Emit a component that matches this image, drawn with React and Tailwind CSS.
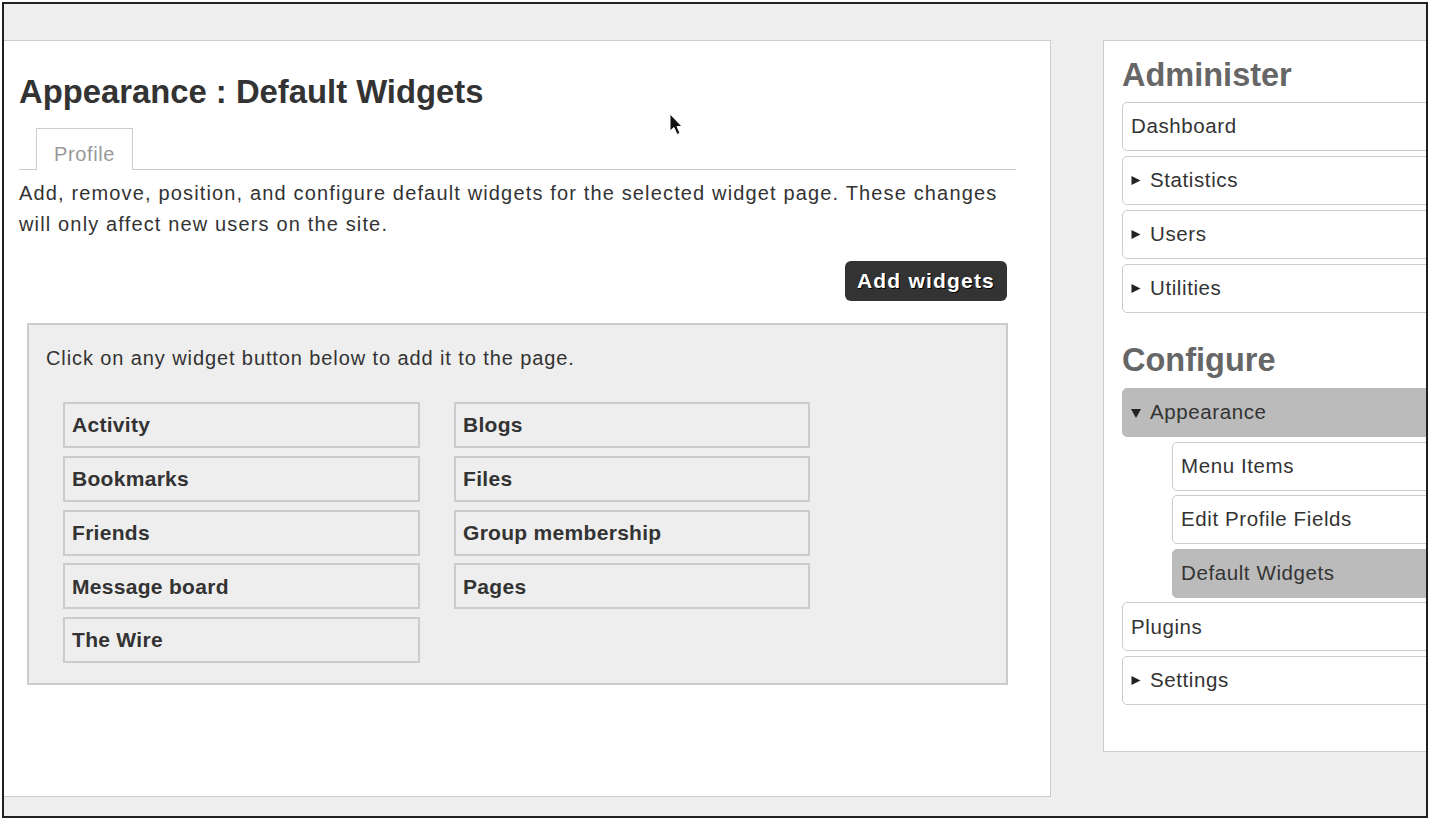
const adminItems = [
  { label: 'Dashboard' },
  { label: 'Statistics', arrow: true },
  { label: 'Users', arrow: true },
  { label: 'Utilities', arrow: true },
]

const configItems = [
  { label: 'Appearance', open: true, active: true },
  { label: 'Menu Items', sub: true },
  { label: 'Edit Profile Fields', sub: true },
  { label: 'Default Widgets', sub: true, active: true },
  { label: 'Plugins' },
  { label: 'Settings', arrow: true },
]

const widgets = [
  'Activity', 'Blogs',
  'Bookmarks', 'Files',
  'Friends', 'Group membership',
  'Message board', 'Pages',
  'The Wire',
]

function Arrow({ open }) {
  return (
    <svg width="10" height="11" viewBox="0 0 10 11" className="mr-[9px] shrink-0">
      {open
        ? <polygon points="0,2 10,2 5,11" fill="#222" />
        : <polygon points="0.5,1 9.5,5.5 0.5,10" fill="#222" />}
    </svg>
  )
}

function MenuItem({ item }) {
  return (
    <div
      className={`h-[49px] flex items-center pl-[8px] rounded-[5px] border text-[20.5px] tracking-[0.6px] text-[#333]
        ${item.sub ? 'ml-[50px]' : ''}
        ${item.active ? 'bg-[#bbbbbb] border-[#bbbbbb]' : 'bg-white border-[#cccccc]'}`}
    >
      {(item.arrow || item.open) && <Arrow open={item.open} />}
      <span>{item.label}</span>
    </div>
  )
}

export default function App() {
  return (
    <div
      className="relative w-[1432px] h-[823px] bg-white pt-[2px] pl-[2px] overflow-hidden"
      style={{ fontFamily: '"Liberation Sans", Arial, sans-serif' }}
    >
      <div className="w-[1426px] h-[816px] border-2 border-[#231f1c] bg-[#eeeeee] overflow-hidden">
        <div className="flex items-start pt-[36px] gap-[52px]">

          {/* Main content */}
          <div className="w-[1047px] h-[757px] shrink-0 bg-white border border-l-0 border-[#cccccc] pl-[15px] pr-[34px] pt-[31px]">
            <h1 className="text-[32.8px] leading-[40px] font-bold text-[#333]">Appearance : Default Widgets</h1>

            <div className="mt-[16px] flex border-b border-[#cccccc] pl-[17px]">
              <div className="w-[97px] h-[42px] -mb-px border border-b-0 border-[#cccccc] bg-white flex items-center justify-center text-[20px] tracking-[0.6px] text-[#999] pt-[8px]">
                Profile
              </div>
            </div>

            <p className="mt-[8px] text-[20px] tracking-[1.15px] leading-[31px] text-[#333]">
              Add, remove, position, and configure default widgets for the selected widget page. These changes will only affect new users on the site.
            </p>

            <div className="mt-[21px] flex justify-end pr-[9px]">
              <div
                className="h-[40px] px-[12px] rounded-[6px] bg-[#333] text-white font-bold text-[21px] tracking-[1.2px] flex items-center"
                style={{ textShadow: '1px 1px 0 #000' }}
              >
                Add widgets
              </div>
            </div>

            <div className="mt-[22px] mx-[8px] h-[362px] border-2 border-[#cccccc] bg-[#eeeeee] pt-[18px]">
              <p className="pl-[17px] text-[20px] tracking-[0.9px] leading-[31px] text-[#333]">
                Click on any widget button below to add it to the page.
              </p>
              <div className="mt-[28px] pl-[34px] grid grid-cols-[357px_356px] gap-x-[34px] gap-y-[7.75px]">
                {widgets.map(w => (
                  <div key={w} className="h-[46px] border-2 border-[#cccccc] bg-[#eeeeee] flex items-center pl-[7px] font-bold text-[21px] tracking-[0.3px] text-[#333]">
                    {w}
                  </div>
                ))}
              </div>
            </div>
          </div>

          {/* Sidebar */}
          <div className="w-[360px] shrink-0 bg-white border border-[#cccccc] pt-[14px] pl-[18px] pb-[46px]">
            <h2 className="text-[32.5px] leading-[40px] font-bold text-[#666]">Administer</h2>
            <div className="mt-[7px] flex flex-col gap-[5px]">
              {adminItems.map(item => <MenuItem key={item.label} item={item} />)}
            </div>
            <h2 className="mt-[27px] text-[32.5px] leading-[40px] font-bold text-[#666]">Configure</h2>
            <div className="mt-[8px] flex flex-col gap-[4.6px]">
              {configItems.map(item => <MenuItem key={item.label} item={item} />)}
            </div>
          </div>

        </div>
      </div>

      {/* mouse pointer */}
      <svg className="absolute left-[669px] top-[113px]" width="16" height="24" viewBox="0 0 16 24">
        <path d="M1 1 L1 18 L5 14.5 L8 21.5 L11 20.2 L8 13.5 L13 13.5 Z" fill="#111" stroke="#fff" strokeWidth="1" strokeLinejoin="round" />
      </svg>
    </div>
  )
}
